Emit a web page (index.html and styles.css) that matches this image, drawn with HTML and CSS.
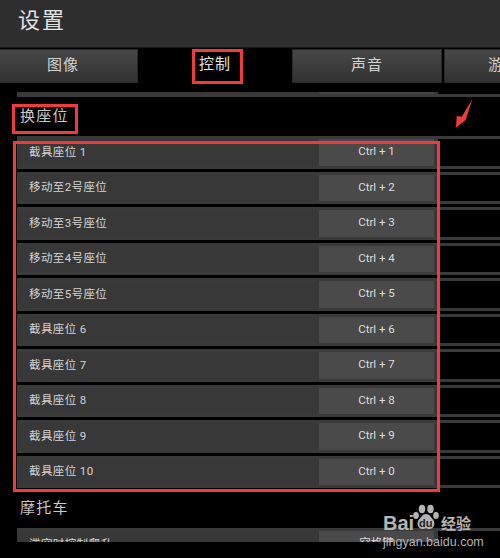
FILE: index.html
```html
<!DOCTYPE html>
<html>
<head>
    <title>设置</title>
    <link rel="stylesheet" href="styles.css">
</head>
<body>
    <div class="screen">
        <div class="header">设置</div>

        <div class="tabs">
            <div class="tab tab-first">图像</div>
            <div class="tab tab-active">控制</div>
            <div class="tab tab-third">声音</div>
            <div class="tab tab-last">游戏</div>
        </div>

        <div class="content">
            <div class="row-end"><div class="row-end-main"><div class="row-end-key"></div></div></div>
            <div class="section-title section-seat">换座位</div>
            <div class="rows">
                <div class="row"><div class="row-main"><span class="label">截具座位 1</span><span class="key">Ctrl + 1</span></div></div>
                <div class="row"><div class="row-main"><span class="label">移动至2号座位</span><span class="key">Ctrl + 2</span></div></div>
                <div class="row"><div class="row-main"><span class="label">移动至3号座位</span><span class="key">Ctrl + 3</span></div></div>
                <div class="row"><div class="row-main"><span class="label">移动至4号座位</span><span class="key">Ctrl + 4</span></div></div>
                <div class="row"><div class="row-main"><span class="label">移动至5号座位</span><span class="key">Ctrl + 5</span></div></div>
                <div class="row"><div class="row-main"><span class="label">截具座位 6</span><span class="key">Ctrl + 6</span></div></div>
                <div class="row"><div class="row-main"><span class="label">截具座位 7</span><span class="key">Ctrl + 7</span></div></div>
                <div class="row"><div class="row-main"><span class="label">截具座位 8</span><span class="key">Ctrl + 8</span></div></div>
                <div class="row"><div class="row-main"><span class="label">截具座位 9</span><span class="key">Ctrl + 9</span></div></div>
                <div class="row"><div class="row-main"><span class="label">截具座位 10</span><span class="key">Ctrl + 0</span></div></div>
            </div>
            <div class="section-title section-moto">摩托车</div>
            <div class="rows">
                <div class="row"><div class="row-main"><span class="label">滞空时控制爬升</span><span class="key">空格键</span></div></div>
            </div>
        </div>
    </div>

    <!-- Red marks drawn over the screenshot -->
    <div class="mark mark-tab"></div>
    <div class="mark mark-title"></div>
    <div class="mark mark-rows"></div>
    <svg class="arrow" width="24" height="36" viewBox="0 0 24 36">
        <polygon points="20.3,3.3 13.7,24 4,31.7 4.7,20 9.7,20.7" fill="#ee3b3b"/>
    </svg>

    <!-- Watermark -->
    <div class="watermark">
        <div class="wm-top">
            <span class="wm-bai">Bai</span>
            <div class="wm-logo">
                <svg width="26" height="30" viewBox="0 0 26 30">
                    <ellipse cx="9" cy="5" rx="3.2" ry="4.2"/>
                    <ellipse cx="17.5" cy="5" rx="3.2" ry="4.2"/>
                    <ellipse cx="3" cy="11.5" rx="2.8" ry="3.4"/>
                    <ellipse cx="23" cy="11.5" rx="2.8" ry="3.4"/>
                    <path d="M13 10c3.5 0 4.500 3 7 5.500 3 3.500 1 9.500-3.500 9.500-1.500 0-2.500-.8-3.500-.8s-2 .8-3.500 .8c-4.500 0-6.500-6-3.500-9.500 2.500-2.500 3.500-5.500 7-5.500z"/>
                </svg>
                <span class="wm-du">du</span>
            </div>
            <span class="wm-jy">经验</span>
        </div>
        <div class="wm-url">jingyan.baidu.com</div>
    </div>
</body>
</html>
```

FILE: styles.css
```css
body {
    margin: 0;
    height: 558px;
    overflow: hidden;
    background-color: #000;
    color: #ccc;
    font-family: Roboto, "Noto Sans CJK SC", sans-serif;
}
.screen {
    height: 542px;
    overflow: hidden;
}
.header {
    height: 47px;
    padding-left: 18px;
    line-height: 42px;
    font-size: 22px;
    letter-spacing: 2px;
    color: #e2e2e2;
    background-color: #2e2e2e;
    border-bottom: 1px solid #1c1c1c;
}
.tabs {
    display: flex;
    height: 35px;
    padding-top: 1px;
    overflow: hidden;
}
.tab {
    flex: none;
    height: 34px;
    line-height: 30px;
    text-align: center;
    font-size: 15px;
    letter-spacing: 1px;
    color: #d2d2d2;
    background: linear-gradient(#474747, #323232);
    box-sizing: border-box;
    border: 1px solid #2a2a2a;
}
.tab-first {
    width: 150px;
    margin-left: -12px;
}
.tab-active {
    width: 154px;
    background: #000;
    border: none;
    color: #e4e4e4;
}
.tab-third {
    width: 150px;
    margin-right: 2px;
}
.tab-last {
    width: 120px;
}
.content {
    padding: 8px 0 0 17px;
}
.row-end {
    height: 2px;
    margin-bottom: 8px;
    border-bottom: 3px solid #3a3a3a;
}
.row-end-main {
    width: 421px;
    height: 2px;
    background-color: #383838;
}
.row-end-key {
    width: 115px;
    height: 2px;
    margin-left: 302px;
    background-color: #444;
}
.section-title {
    font-size: 15px;
    letter-spacing: 1.2px;
    padding-left: 3px;
    color: #c8c8c8;
}
.section-seat {
    height: 31px;
    line-height: 22px;
}
.section-moto {
    height: 40px;
    line-height: 40px;
}
.rows {
    display: flex;
    flex-direction: column;
    gap: 3px;
}
.row {
    flex: none;
    height: 32.5px;
    box-sizing: border-box;
    border-top: 3px solid #3a3a3a;
    border-bottom: 3px solid #3a3a3a;
}
.row-main {
    display: flex;
    align-items: center;
    width: 421px;
    height: 100%;
    background-color: #383838;
}
.label {
    flex: none;
    box-sizing: border-box;
    width: 302px;
    padding-left: 12px;
    line-height: 25px;
    font-size: 11.5px;
    letter-spacing: 0.4px;
    color: #d4d4d4;
}
.key {
    flex: none;
    width: 115px;
    height: 100%;
    line-height: 25px;
    text-align: center;
    font-size: 11.5px;
    color: #dcdcdc;
    background-color: #4a4a4a;
}
.mark {
    position: absolute;
    box-sizing: border-box;
    border: 3px solid #ee3b3b;
}
.mark-tab {
    left: 192px;
    top: 49px;
    width: 51px;
    height: 35px;
}
.mark-title {
    left: 12px;
    top: 104px;
    width: 66px;
    height: 30px;
}
.mark-rows {
    left: 13px;
    top: 141px;
    width: 427px;
    height: 351px;
}
.arrow {
    position: absolute;
    left: 452px;
    top: 96px;
}
.watermark {
    position: absolute;
    left: 383px;
    top: 504px;
    width: 100px;
    color: #b4b4b4;
}
.wm-top {
    display: flex;
    align-items: flex-end;
    height: 30px;
}
.wm-bai {
    width: 30px;
    font-family: "Liberation Sans", sans-serif;
    font-weight: bold;
    font-size: 20px;
    line-height: 22px;
}
.wm-logo {
    position: relative;
    width: 26px;
    height: 30px;
    fill: #b4b4b4;
}
.wm-du {
    position: absolute;
    left: 6px;
    top: 13px;
    font-family: "Liberation Sans", sans-serif;
    font-weight: bold;
    font-size: 11px;
    line-height: 12px;
    color: #222;
}
.wm-jy {
    font-size: 15px;
    line-height: 20px;
    margin-left: 2px;
    font-weight: bold;
    white-space: nowrap;
}
.wm-url {
    margin-top: 1px;
    font-family: "Liberation Sans", sans-serif;
    font-size: 12.5px;
    line-height: 14px;
    white-space: nowrap;
}
```
